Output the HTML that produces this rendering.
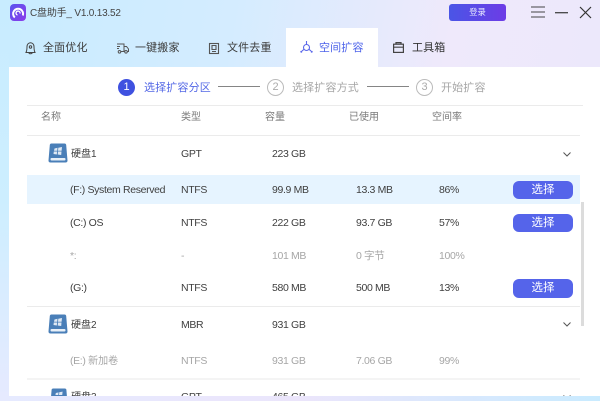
<!DOCTYPE html>
<html lang="zh-CN"><head><meta charset="utf-8"><title>C盘助手</title>
<style>
html,body{margin:0;padding:0}
#app{position:relative;width:600px;height:401px;overflow:hidden;font-family:"Liberation Sans","Noto Sans CJK SC",sans-serif;background:linear-gradient(100deg,#c8ecff 0%,#d4ecff 35%,#efe9fb 68%,#ebe8fb 100%);color:#333}
#wrap{position:absolute;left:0;top:0;width:600px;height:401px;filter:blur(.3px)}
#app div{position:absolute;white-space:nowrap}
.t{font-size:10.500px;letter-spacing:-.35px;line-height:16px;height:16px;color:#3f3f3f}
.c{font-size:10px;letter-spacing:0}
.g{color:#a6a6a6}
.h{color:#7a7a7a;font-size:10px;letter-spacing:0}
.tab{font-size:11px;letter-spacing:.15px;line-height:16px;top:40px;color:#3c3c3c}
.l{left:27px;width:553px;height:1px;background:#ebebeb}
.btn{left:513px;width:60px;height:18.500px;border-radius:6px;background:#5564ea;color:#fff;font-size:11.500px;line-height:18.500px;text-align:center}
svg{position:absolute;overflow:visible}
.sn{font-size:11px;letter-spacing:.15px;line-height:16px;top:80px}
.num{top:79px;width:15px;height:15px;border:1px solid #bbb;border-radius:50%;color:#aaa;font-size:11px;line-height:15px;text-align:center}
.bar{top:85.500px;width:42px;height:1px;background:#858585}
</style></head><body><div id="app"><div id="wrap">

<div style="left:0;top:0;width:9px;height:401px;background:linear-gradient(180deg,#c8ecff 0%,#cdeeff 50%,#e6eaff 100%)"></div>
<div style="left:0;top:392px;width:600px;height:9px;background:linear-gradient(90deg,#e6eaff,#ebe5fb 50%,#c9ebff)"></div>

<!-- logo -->
<svg style="left:10px;top:4px" width="16" height="17" viewBox="0 0 16 17"><defs><linearGradient id="lg" x1="0" y1="0" x2="1" y2="1"><stop offset="0" stop-color="#5a55ee"/><stop offset="1" stop-color="#8b3bea"/></linearGradient></defs><rect width="16" height="17" rx="4" fill="url(#lg)"/><path d="M4.800 13.500A5 5 0 1 1 12.800 11.500" fill="none" stroke="#fff" stroke-width="2"/><path d="M7.500 11A2 2 0 1 1 10 9.500" fill="none" stroke="#fff" stroke-width="1.300"/></svg>
<div style="left:30px;top:6px;font-size:10px;letter-spacing:-.2px;line-height:16px;color:#444">C盘助手_ V1.0.13.52</div>

<!-- login -->
<div style="left:449px;top:4px;width:57px;height:17px;border-radius:3px;background:linear-gradient(90deg,#4a55e6,#6d3ce6);color:#e8e8ff;font-size:8.300px;line-height:17px;text-align:center">登录</div>

<!-- window controls -->
<svg style="left:530px;top:6px" width="64" height="14" viewBox="0 0 64 14" fill="none" stroke="#444" stroke-width="1.100"><path d="M1 1H15M1 6H15M1 11H15"/><path d="M25 6.700H38" stroke-width="1.300"/><path d="M50 1L61 12M61 1L50 12" stroke="#333" stroke-width="1.200"/></svg>

<!-- active tab and panel -->
<div style="left:286px;top:28px;width:92px;height:40px;background:#fff"></div>
<div style="left:9px;top:67px;width:591px;height:329px;background:#fff"></div>

<!-- tabs -->
<svg style="left:25px;top:42px" width="11" height="12" viewBox="0 0 11 12" fill="none" stroke="#444" stroke-width="1"><path d="M1 10.500C2 8.500 2 6.500 2 4.500A3.500 3.800 0 0 1 9 4.500C9 6.500 9 8.500 10 10.500Z"/><circle cx="5.500" cy="5" r="1.200"/><path d="M3.800 10.500A1.700 1.300 0 0 0 7.200 10.500"/></svg>
<div class="tab" style="left:43px">全面优化</div>
<svg style="left:116px;top:43px" width="13" height="11" viewBox="0 0 13 11" fill="none" stroke="#555" stroke-width="1"><path d="M1 1H8V8.500H5M1 3.500H4M1 5.500H3M8 3.500H10.500L12.500 6V8.500H11.500M8 8.500H8.500"/><circle cx="3.500" cy="8.800" r="1.300"/><circle cx="10" cy="8.800" r="1.300"/></svg>
<div class="tab" style="left:135px">一键搬家</div>
<svg style="left:209px;top:43px" width="10" height="11" viewBox="0 0 10 11" fill="none" stroke="#555" stroke-width="1.100"><rect x=".5" y=".5" width="9" height="10"/><path d="M3 2.500H7V6.500H3ZM3 8.500H7"/></svg>
<div class="tab" style="left:227px">文件去重</div>
<svg style="left:300px;top:41px" width="14" height="13" viewBox="0 0 14 13" fill="none" stroke="#5b68ea" stroke-width="1.100"><circle cx="6.500" cy="6.500" r="3"/><path d="M6.500 0V3.500M4 8.300L2 10M9 8.300L11 10"/><circle cx="1.300" cy="10.800" r="1" fill="#5b68ea" stroke="none"/><circle cx="11.700" cy="10.800" r="1" fill="#5b68ea" stroke="none"/></svg>
<div class="tab" style="left:319px;color:#4d63ea">空间扩容</div>
<svg style="left:393px;top:42px" width="11" height="11" viewBox="0 0 11 11" fill="none" stroke="#444" stroke-width="1.200"><rect x=".6" y="2.200" width="9.800" height="8.200"/><path d="M.6 5.200H10.400M3 2.200V.6H8V2.200"/></svg>
<div class="tab" style="left:412px;color:#333">工具箱</div>

<!-- steps -->
<div style="left:118px;top:79px;width:17px;height:17px;border-radius:50%;background:#3f51e0;color:#fff;font-size:11px;line-height:17px;text-align:center">1</div>
<div class="sn" style="left:144px;color:#5468e6">选择扩容分区</div>
<div class="bar" style="left:218px"></div>
<div class="num" style="left:267px">2</div>
<div class="sn g" style="left:292px">选择扩容方式</div>
<div class="bar" style="left:367px"></div>
<div class="num" style="left:416px">3</div>
<div class="sn g" style="left:441px">开始扩容</div>

<div class="l" style="top:105px;width:556px"></div>
<div class="t h" style="left:41px;top:110px">名称</div>
<div class="t h" style="left:181px;top:110px">类型</div>
<div class="t h" style="left:265px;top:110px">容量</div>
<div class="t h" style="left:349px;top:110px">已使用</div>
<div class="t h" style="left:432px;top:110px">空间率</div>
<div class="l" style="top:135px"></div>

<!-- selected row -->
<div style="left:27px;top:175px;width:553px;height:29px;background:#e6f4ff"></div>
<!-- scrollbar -->
<div style="left:581px;top:202px;width:3px;height:124px;background:#dcdcdc"></div>

<!-- disk 1 -->
<svg style="left:48px;top:143px" width="20" height="20" viewBox="0 0 20 20"><path d="M3.500 .5H16.500Q18 .5 18.200 2L19.500 17.500Q19.500 19.500 17.500 19.500H2.500Q.5 19.500 .5 17.500L1.800 2Q2 .5 3.500 .5Z" fill="#4a7fb8"/><rect x="2.500" y="15" width="15" height="2.500" rx="1" fill="#e8f0f8"/><path d="M6.500 5.500L9.500 4.800L9.200 7.800H6ZM10.300 4.700L14 4L13.600 7.800H10ZM5.800 8.500H9.100L8.800 11.500L5.500 11ZM10 8.500H13.500L13.200 12L9.700 11.500Z" fill="#dfe9f4"/></svg>
<div class="t c" style="left:71px;top:147px">硬盘1</div>
<div class="t" style="left:181px;top:146px">GPT</div>
<div class="t" style="left:272px;top:146px">223 GB</div>
<svg style="left:563px;top:152px" width="8" height="5" viewBox="0 0 8 5" fill="none" stroke="#555" stroke-width="1"><path d="M.5 .5L4 4L7.500 .5"/></svg>

<div class="t" style="left:70px;top:182px">(F:) System Reserved</div>
<div class="t" style="left:181px;top:182px">NTFS</div>
<div class="t" style="left:272px;top:182px">99.9 MB</div>
<div class="t" style="left:356px;top:182px">13.3 MB</div>
<div class="t" style="left:439px;top:182px">86%</div>
<div class="btn" style="top:180.500px">选择</div>

<div class="t" style="left:70px;top:215px">(C:) OS</div>
<div class="t" style="left:181px;top:215px">NTFS</div>
<div class="t" style="left:272px;top:215px">222 GB</div>
<div class="t" style="left:356px;top:215px">93.7 GB</div>
<div class="t" style="left:439px;top:215px">57%</div>
<div class="btn" style="top:213.500px">选择</div>

<div class="t g" style="left:70px;top:248px">*:</div>
<div class="t g" style="left:181px;top:248px">-</div>
<div class="t g" style="left:272px;top:248px">101 MB</div>
<div class="t g" style="left:356px;top:248px">0 字节</div>
<div class="t g" style="left:439px;top:248px">100%</div>

<div class="t" style="left:70px;top:280px">(G:)</div>
<div class="t" style="left:181px;top:280px">NTFS</div>
<div class="t" style="left:272px;top:280px">580 MB</div>
<div class="t" style="left:356px;top:280px">500 MB</div>
<div class="t" style="left:439px;top:280px">13%</div>
<div class="btn" style="top:279px">选择</div>

<div class="l" style="top:306px"></div>

<!-- disk 2 -->
<svg style="left:48px;top:314px" width="20" height="20" viewBox="0 0 20 20"><path d="M3.500 .5H16.500Q18 .5 18.200 2L19.500 17.500Q19.500 19.500 17.500 19.500H2.500Q.5 19.500 .5 17.500L1.800 2Q2 .5 3.500 .5Z" fill="#4a7fb8"/><rect x="2.500" y="15" width="15" height="2.500" rx="1" fill="#e8f0f8"/><path d="M6.500 5.500L9.500 4.800L9.200 7.800H6ZM10.300 4.700L14 4L13.600 7.800H10ZM5.800 8.500H9.100L8.800 11.500L5.500 11ZM10 8.500H13.500L13.200 12L9.700 11.500Z" fill="#dfe9f4"/></svg>
<div class="t c" style="left:71px;top:318px">硬盘2</div>
<div class="t" style="left:181px;top:317px">MBR</div>
<div class="t" style="left:272px;top:317px">931 GB</div>
<svg style="left:563px;top:322px" width="8" height="5" viewBox="0 0 8 5" fill="none" stroke="#555" stroke-width="1"><path d="M.5 .5L4 4L7.500 .5"/></svg>

<div class="t g" style="left:70px;top:353px">(E:) <span class="c">新加卷</span></div>
<div class="t g" style="left:181px;top:353px">NTFS</div>
<div class="t g" style="left:272px;top:353px">931 GB</div>
<div class="t g" style="left:356px;top:353px">7.06 GB</div>
<div class="t g" style="left:439px;top:353px">99%</div>

<div class="l" style="top:378px;height:2px;background:#f4f4f4"></div>

<!-- disk 3 clipped by bottom strip -->
<div style="left:9px;top:380px;width:591px;height:16px;overflow:hidden">
<svg style="left:41px;top:7px" width="18" height="20" viewBox="0 0 20 20"><path d="M3.500 .5H16.500Q18 .5 18.200 2L19.500 17.500Q19.500 19.500 17.500 19.500H2.500Q.5 19.500 .5 17.500L1.800 2Q2 .5 3.500 .5Z" fill="#4a7fb8"/><path d="M6.500 5.500L9.500 4.800L9.200 7.800H6ZM10.300 4.700L14 4L13.600 7.800H10Z" fill="#dfe9f4"/></svg>
<div class="t c" style="left:62px;top:10px">硬盘3</div>
<div class="t" style="left:172px;top:9px">GPT</div>
<div class="t" style="left:263px;top:9px">465 GB</div>
<svg style="left:554px;top:15px" width="8" height="5" viewBox="0 0 8 5" fill="none" stroke="#555" stroke-width="1"><path d="M.5 .5L4 4L7.500 .5"/></svg>
</div>

</div></div></body></html>
